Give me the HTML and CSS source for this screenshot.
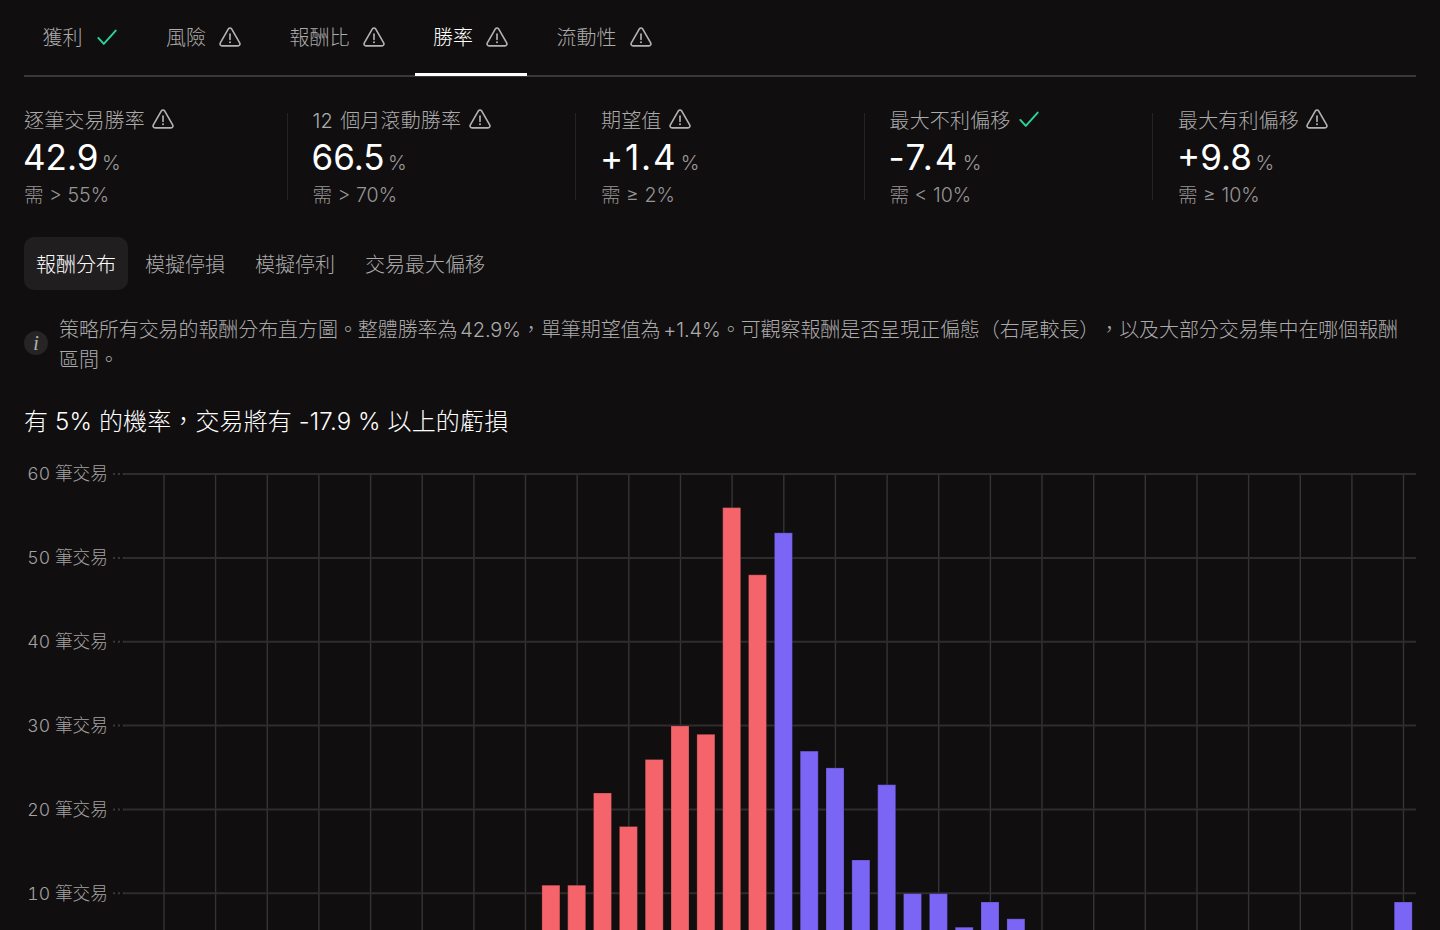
FILE: index.html
```html
<!DOCTYPE html>
<html lang="zh-Hant">
<head>
<meta charset="utf-8">
<title>勝率</title>
<link rel="stylesheet" href="styles.css">
</head>
<body>
<svg class="defs" width="0" height="0" aria-hidden="true">
  <symbol id="warn" viewBox="0.5 0.5 23 23">
    <path d="M10.3 3.6 1.9 18.2c-.8 1.4.2 3.1 1.8 3.1h16.6c1.6 0 2.6-1.7 1.8-3.1L13.7 3.6c-.8-1.3-2.6-1.3-3.4 0Z" fill="none" stroke="currentColor" stroke-width="1.7" stroke-linejoin="round"/>
    <path d="M12 9v5.6" fill="none" stroke="currentColor" stroke-width="1.7" stroke-linecap="round"/>
    <circle cx="12" cy="17.6" r="1.05" fill="currentColor"/>
  </symbol>
  <symbol id="check" viewBox="0 0 24 24">
    <path d="M2.5 13 8.5 19.5 21.5 5" fill="none" stroke="currentColor" stroke-width="2.1" stroke-linecap="round" stroke-linejoin="round"/>
  </symbol>
</svg>
<main class="page">
  <nav class="tabs">
    <a class="tab"><span>獲利</span><svg class="icon ok"><use href="#check"/></svg></a>
    <a class="tab"><span>風險</span><svg class="icon"><use href="#warn"/></svg></a>
    <a class="tab"><span>報酬比</span><svg class="icon"><use href="#warn"/></svg></a>
    <a class="tab active"><span>勝率</span><svg class="icon"><use href="#warn"/></svg></a>
    <a class="tab"><span>流動性</span><svg class="icon"><use href="#warn"/></svg></a>
  </nav>

  <section class="metrics">
    <div class="metric">
      <div class="m-label">逐筆交易勝率<svg class="icon"><use href="#warn"/></svg></div>
      <div class="m-value">42.9<small>%</small></div>
      <div class="m-need">需 &gt; 55%</div>
    </div>
    <div class="rule"></div>
    <div class="metric">
      <div class="m-label">12 個月滾動勝率<svg class="icon"><use href="#warn"/></svg></div>
      <div class="m-value">66.5<small>%</small></div>
      <div class="m-need">需 &gt; 70%</div>
    </div>
    <div class="rule"></div>
    <div class="metric">
      <div class="m-label">期望值<svg class="icon"><use href="#warn"/></svg></div>
      <div class="m-value wide">+1.4<small>%</small></div>
      <div class="m-need">需 ≥ 2%</div>
    </div>
    <div class="rule"></div>
    <div class="metric">
      <div class="m-label">最大不利偏移<svg class="icon ok"><use href="#check"/></svg></div>
      <div class="m-value wide">-7.4<small>%</small></div>
      <div class="m-need">需 &lt; 10%</div>
    </div>
    <div class="rule"></div>
    <div class="metric">
      <div class="m-label">最大有利偏移<svg class="icon"><use href="#warn"/></svg></div>
      <div class="m-value">+9.8<small>%</small></div>
      <div class="m-need">需 ≥ 10%</div>
    </div>
  </section>

  <div class="subtabs">
    <a class="subtab active">報酬分布</a>
    <a class="subtab">模擬停損</a>
    <a class="subtab">模擬停利</a>
    <a class="subtab">交易最大偏移</a>
  </div>

  <div class="info">
    <span class="info-badge">i</span>
    <p>策略所有交易的報酬分布直方圖。整體勝率為 42.9%，單筆期望值為 +1.4%。可觀察報酬是否呈現正偏態（右尾較長），以及大部分交易集中在哪個報酬區間。</p>
  </div>

  <h2 class="headline">有 5% 的機率，交易將有 -17.9 % 以上的虧損</h2>

  <svg class="chart" viewBox="24 460 1392 470" width="1392" height="470">
    <g class="grid-v">
      <path d="M164 474V930M215.6 474V930M267.3 474V930M318.9 474V930M370.6 474V930M422.2 474V930M473.9 474V930M525.5 474V930M577.2 474V930M628.8 474V930M680.5 474V930M732.1 474V930M783.8 474V930M835.4 474V930M887.1 474V930M938.7 474V930M990.4 474V930M1042 474V930M1093.7 474V930M1145.3 474V930M1197 474V930M1248.6 474V930M1300.3 474V930M1351.9 474V930M1403.5 474V930"/>
    </g>
    <g class="grid-h">
      <path d="M124 474H1416M124 558H1416M124 641.8H1416M124 725.6H1416M124 809.4H1416M124 893.2H1416"/>
    </g>
    <g class="ticks">
      <path d="M113 474H124M113 558H124M113 641.8H124M113 725.6H124M113 809.4H124M113 893.2H124"/>
    </g>
    <g class="y-labels">
      <text x="108" y="479.6">60 筆交易</text>
      <text x="108" y="563.6">50 筆交易</text>
      <text x="108" y="648">40 筆交易</text>
      <text x="108" y="732">30 筆交易</text>
      <text x="108" y="815.8">20 筆交易</text>
      <text x="108" y="899.6">10 筆交易</text>
    </g>
    <g class="bars red">
      <rect x="541.9" y="885.2" width="18" height="60"/>
      <rect x="567.7" y="885.2" width="18" height="60"/>
      <rect x="593.5" y="793" width="18" height="150"/>
      <rect x="619.4" y="826.5" width="18" height="120"/>
      <rect x="645.2" y="759.5" width="18" height="190"/>
      <rect x="671" y="725.9" width="18" height="220"/>
      <rect x="696.9" y="734.3" width="18" height="210"/>
      <rect x="722.7" y="507.6" width="18" height="430"/>
      <rect x="748.5" y="574.8" width="18" height="370"/>
    </g>
    <g class="bars violet">
      <rect x="774.4" y="532.8" width="18" height="410"/>
      <rect x="800.2" y="751.1" width="18" height="190"/>
      <rect x="826" y="767.9" width="18" height="170"/>
      <rect x="851.9" y="860" width="18" height="80"/>
      <rect x="877.7" y="784.7" width="18" height="160"/>
      <rect x="903.5" y="893.6" width="18" height="50"/>
      <rect x="929.4" y="893.6" width="18" height="50"/>
      <rect x="955.2" y="927.2" width="18" height="20"/>
      <rect x="981" y="902" width="18" height="40"/>
      <rect x="1006.9" y="918.8" width="18" height="30"/>
      <rect x="1394.2" y="902" width="18" height="40"/>
    </g>
  </svg>
</main>
</body>
</html>
```

FILE: styles.css
```css
* { box-sizing: border-box; }
html, body { margin: 0; height: 930px; overflow: hidden; background: #100e0f; }
body {
  font-family: Inter, "Noto Sans CJK TC", sans-serif;
  font-weight: 300;
  color: #acabab;
  text-spacing-trim: space-all;
}
.defs { position: absolute; }
.page { padding: 0 24px; }

.icon { width: 22px; height: 22px; flex: none; color: #b3b2b2; }
.icon.ok { color: #2bd39e; }

.tabs {
  display: flex;
  gap: 11.5px;
  height: 77px;
  border-bottom: 2px solid #3a3839;
}
.tab {
  position: relative;
  display: flex;
  align-items: center;
  gap: 13px;
  height: 75px;
  padding: 0 18.5px 2px;
  font-size: 20px;
  color: #acabab;
}
.tab.active { color: #fff; }
.tab.active::after {
  content: "";
  position: absolute;
  left: 0;
  right: 0;
  bottom: -1px;
  height: 3px;
  background: #fff;
}

.metrics {
  display: grid;
  grid-template-columns: 1fr 1px 1fr 1px 1fr 1px 1fr 1px 1fr;
  grid-template-rows: 87px;
  column-gap: 24.75px;
  margin-top: 36px;
  height: 87px;
}
.rule { background: #252324; }
.metric { white-space: nowrap; }
.m-label {
  display: flex;
  align-items: center;
  gap: 7.5px;
  height: 24px;
  margin-top: -6px;
  font-size: 20px;
  letter-spacing: .15px;
  word-spacing: 1.5px;
  color: #acabab;
}
.m-value {
  margin: 3px 0 1px -1px;
  height: 46px;
  font-size: 35px;
  line-height: 46px;
  font-weight: 400;
  color: #fff;
}
.m-value.wide { letter-spacing: 1.8px; }
.m-value small { margin-left: 3.5px; font-size: 20px; font-weight: 300; letter-spacing: 0; color: #9a9999; }
.m-need { font-size: 19.6px; line-height: 28px; color: #969595; }

.subtabs { display: flex; gap: 6px; margin-top: 37px; }
.subtab {
  padding: 3px 12px 0;
  height: 53px;
  line-height: 50px;
  font-size: 20px;
  color: #acabab;
  border-radius: 10px;
}
.subtab.active { background: #201e1f; color: #fff; }
.subtab:nth-child(2) { margin-left: -1px; }

.info { display: flex; align-items: center; gap: 11px; margin-top: 24px; }
.info p { margin: 1px 0 0; font-size: 20px; line-height: 30px; color: #acabab; letter-spacing: -0.08px; word-spacing: -2.7px; }
.info-badge {
  width: 24px;
  height: 24px;
  flex: none;
  margin-top: -4px;
  border-radius: 50%;
  background: #262425;
  font-family: "Liberation Serif", serif;
  font-style: italic;
  font-size: 20px;
  line-height: 24px;
  text-align: center;
  color: #b5b4b4;
}

.headline { margin: 29px 0 0; height: 36px; font-size: 24px; line-height: 36px; font-weight: 300; color: #fff; letter-spacing: .13px; }

.chart { display: block; margin-top: 20px; overflow: hidden; }
.grid-v path { stroke: #363435; stroke-width: 1.4; fill: none; }
.grid-h path { stroke: #2e2c2d; stroke-width: 2; fill: none; }
.ticks path { stroke: #3a3839; stroke-width: 2; stroke-dasharray: 2 3; fill: none; }
.y-labels text { font-size: 17.7px; fill: #a3a2a2; text-anchor: end; font-variant-numeric: tabular-nums; }
.bars.red rect { fill: #f4646a; stroke: #100e0f; stroke-opacity: .25; stroke-width: 1; }
.bars.violet rect { fill: #7b65f5; stroke: #100e0f; stroke-opacity: .25; stroke-width: 1; }
```
